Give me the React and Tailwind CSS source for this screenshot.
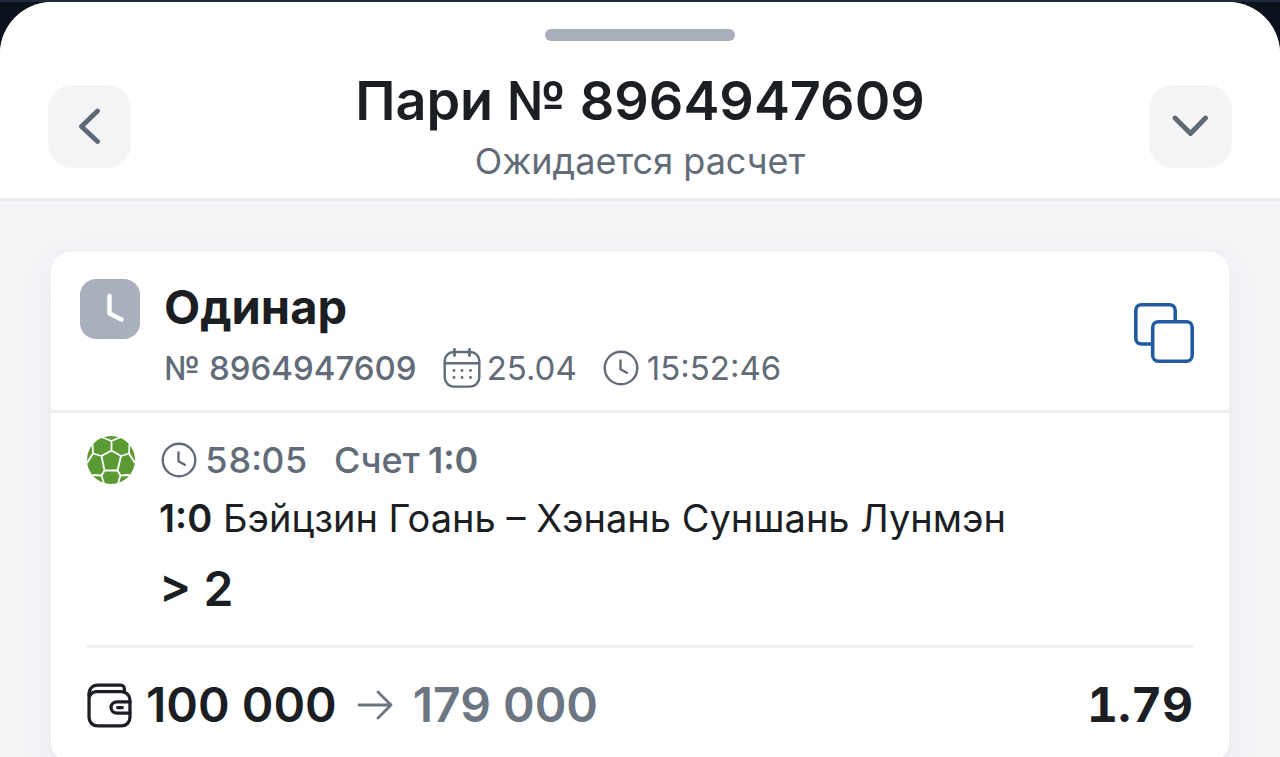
const bet = {
  number: "8964947609",
  status: "Ожидается расчет",
  type: "Одинар",
  date: "25.04",
  time: "15:52:46",
  matchTime: "58:05",
  score: "1:0",
  teams: "Бэйцзин Гоань – Хэнань Суншань Лунмэн",
  pick: "> 2",
  stake: "100 000",
  win: "179 000",
  odds: "1.79",
};

function ClockIcon() {
  return (
    <svg className="size-9 shrink-0" viewBox="0 0 36 36" fill="none" stroke="currentColor" strokeWidth="2.4" strokeLinecap="round" strokeLinejoin="round">
      <circle cx="18" cy="18" r="16.3" />
      <path d="M17.5 10.5v8.7l6.3 3.6" />
    </svg>
  );
}

function CalendarIcon() {
  return (
    <svg className="h-10 w-[38px] shrink-0" viewBox="0 0 38 40" fill="none" stroke="currentColor" strokeWidth="2.4" strokeLinecap="round">
      <rect x="1.7" y="4" width="34.6" height="34.6" rx="9" />
      <path d="M2 15.2h34" />
      <path strokeWidth="2.8" d="M11.5 1.5v6M26.5 1.5v6" />
      <g fill="currentColor" stroke="none">
        <circle cx="11" cy="22.5" r="1.4" />
        <circle cx="19" cy="22.5" r="1.4" />
        <circle cx="27.5" cy="22.5" r="1.4" />
        <circle cx="11" cy="29.5" r="1.4" />
        <circle cx="19" cy="29.5" r="1.4" />
        <circle cx="27.5" cy="29.5" r="1.4" />
      </g>
    </svg>
  );
}

function BallIcon() {
  return (
    <svg className="size-12 shrink-0" viewBox="0 0 48 48" fill="none">
      <circle cx="24" cy="24" r="24" fill="#5a9a33" />
      <path
        stroke="#fff"
        strokeWidth="1.8"
        strokeLinejoin="round"
        d="M24.5 14.5 34 20 30.5 34.5H17.5L14.5 20ZM24.5 14.5V5M34 20 42 17.5M30.5 34.5 33.5 39.5M17.5 34.5 14.5 39.5M14.5 20 6 17.5M24.5 5 14.500 1M24.5 5 34 1M6 17.5 5.500 8M42 17.5 42.5 8M6 17.5 0 27M42 17.5 48 27M14.5 39.5 5.5 39M33.5 39.5 42.5 39M14.5 39.5 17 47.5M33.5 39.5 31 47.5"
      />
    </svg>
  );
}

function WalletIcon() {
  return (
    <svg className="size-[45px] shrink-0" viewBox="0 0 44 44" fill="none" stroke="currentColor" strokeWidth="3.2" strokeLinecap="round" strokeLinejoin="round">
      <path d="M2 11.5C2 5.5 5.5 2 10.5 2H33c2 0 3.5 1.5 3.5 3.5V9" />
      <path d="M2 15.5C2 11.5 5 8.500 9 8.500h24.500c5 0 8.500 3.500 8.500 8.500v16.500c0 5-3.500 8.500-8.500 8.500H10.500C5.500 42 2 38.500 2 33.500V11" />
      <path d="M42 18.500H29.500c-3.500 0-6 2.300-6 5.500s2.500 5.500 6 5.500H42" />
      <path d="M30 24h4.500" />
    </svg>
  );
}

function CopyIcon() {
  return (
    <svg className="size-15" viewBox="0 0 60 60" fill="none" stroke="#235ba3" strokeWidth="3.6">
      <path d="M18.500 41H7.500c-3.500 0-5.700-2.200-5.700-5.700V7.500C1.800 4 4 1.800 7.500 1.800h28c3.500 0 5.700 2.200 5.700 5.700v11" />
      <rect x="18.700" y="18.700" width="39.500" height="39.500" rx="5.700" />
    </svg>
  );
}

function Header() {
  return (
    <header className="border-b-3 border-[#ecedf2] bg-white px-12 pt-[27px] pb-3">
      <div className="mx-auto h-3 w-[190px] rounded-full bg-[#a9afbc]" />
      <div className="flex items-center justify-between pt-[25px]">
        <button type="button" aria-label="Назад" className="flex size-[83px] items-center justify-center rounded-3xl bg-[#f3f4f6] text-[#5f6875]">
          <svg className="size-9" viewBox="0 0 36 36" fill="none" stroke="currentColor" strokeWidth="4.800" strokeLinecap="round" strokeLinejoin="round">
            <path d="M25.500 3 9.500 18.500l16 15" />
          </svg>
        </button>
        <div className="text-center">
          <h1 className="text-[54px] leading-[70px] font-semibold">Пари № {bet.number}</h1>
          <p className="text-[36px] leading-[50px] text-[#626b78]">{bet.status}</p>
        </div>
        <button type="button" aria-label="Свернуть" className="flex size-[83px] items-center justify-center rounded-3xl bg-[#f3f4f6] text-[#5f6875]">
          <svg className="size-9" viewBox="0 0 36 36" fill="none" stroke="currentColor" strokeWidth="4.800" strokeLinecap="round" strokeLinejoin="round">
            <path d="M3 10 18.500 25.500 33.500 10" />
          </svg>
        </button>
      </div>
    </header>
  );
}

export default function App() {
  return (
    <div className="h-screen overflow-hidden bg-[#0a111d] font-['Inter',sans-serif] text-[#1b1f24]">
      <div className="h-0.5 bg-[#20283c]" />
      <div className="min-h-full overflow-hidden rounded-t-[52px] bg-[#f3f4f6]">
        <Header />
        <main className="px-[51px] pt-[51px]">
          <article className="rounded-[20px] bg-white shadow-[0_12px_36px_rgba(60,80,140,0.07)]">
            <div className="flex items-start gap-6 border-b-3 border-[#eeeeef] pt-[27px] pr-[35px] pb-5 pl-[29px]">
              <svg className="size-15 shrink-0" viewBox="0 0 60 60" fill="none">
                <rect width="60" height="60" rx="16" fill="#a9afbc" />
                <path d="M29.500 17v17.500L41.500 40.500" stroke="#fff" strokeWidth="4.500" strokeLinecap="round" strokeLinejoin="round" />
              </svg>
              <div className="flex-1">
                <h2 className="text-[47px] leading-14 font-bold">{bet.type}</h2>
                <div className="mt-[11px] flex items-center gap-[26px] text-[33px] leading-11 text-[#626b78]">
                  <span className="font-medium">№ {bet.number}</span>
                  <span className="flex items-center gap-1.5">
                    <CalendarIcon />
                    {bet.date}
                  </span>
                  <span className="flex items-center gap-2">
                    <ClockIcon />
                    {bet.time}
                  </span>
                </div>
              </div>
              <button type="button" aria-label="Скопировать" className="mt-6">
                <CopyIcon />
              </button>
            </div>
            <div className="px-9">
              <div className="flex items-start gap-6 border-b-3 border-[#eeeeef] pt-[23px] pb-[26px]">
                <BallIcon />
                <div>
                  <div className="flex items-center gap-[26px] pl-0.5 text-[36px] leading-12 font-medium text-[#626b78]">
                    <span className="flex items-center gap-2 tabular-nums">
                      <ClockIcon />
                      {bet.matchTime}
                    </span>
                    <span className="flex gap-2">
                      Счет <b className="font-semibold">{bet.score}</b>
                    </span>
                  </div>
                  <p className="mt-1.5 text-[38px] leading-14">
                    <b className="font-semibold">{bet.score}</b> {bet.teams}
                  </p>
                  <p className="mt-[13px] text-[48px] leading-15 font-semibold">{bet.pick}</p>
                </div>
              </div>
              <div className="flex items-center py-[27px] text-[48px] leading-15 font-semibold">
                <WalletIcon />
                <span className="ml-3.5">{bet.stake}</span>
                <svg className="mx-5 h-8 w-9 shrink-0 text-[#6c7582]" viewBox="0 0 36 32" fill="none" stroke="currentColor" strokeWidth="2.800" strokeLinecap="round" strokeLinejoin="round">
                  <path d="M2 16h32M21 3l13 13-13 13" />
                </svg>
                <span className="text-[#6c7582]">{bet.win}</span>
                <span className="ml-auto font-bold tabular-nums">{bet.odds}</span>
              </div>
            </div>
          </article>
        </main>
      </div>
    </div>
  );
}
